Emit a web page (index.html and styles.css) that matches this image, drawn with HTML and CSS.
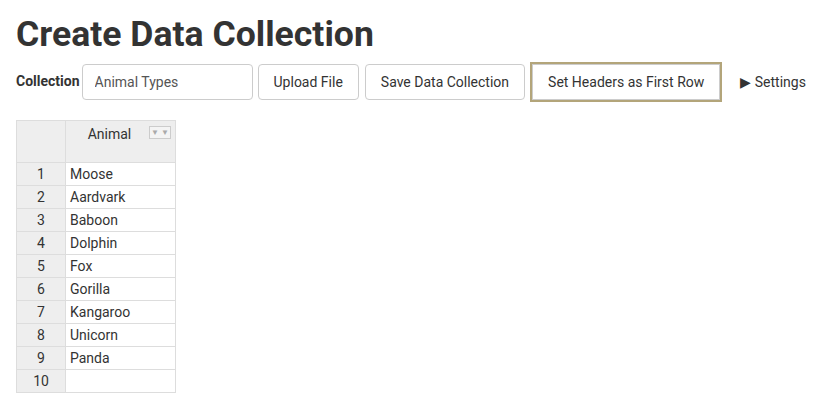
FILE: index.html
```html
<!DOCTYPE html>
<html lang="en">
<head>
    <meta charset="UTF-8">
    <title>Create Data Collection</title>
    <link rel="stylesheet" href="styles.css">
</head>
<body>
    <div class="page">
        <h1>Create Data Collection</h1>
        <div class="toolbar">
            <label class="field-label" for="collectionName">Collection</label>
            <input id="collectionName" class="text-input" type="text" value="Animal Types">
            <button class="btn">Upload File</button>
            <button class="btn">Save Data Collection</button>
            <button class="btn btn-focus">Set Headers as First Row</button>
            <div class="settings">&#9654; Settings</div>
        </div>

        <table class="grid">
            <tr>
                <th class="corner"></th>
                <th class="col-head">
                    Animal
                    <span class="filter-btn">&#9660; &#9660;</span>
                </th>
            </tr>
            <tr><td class="idx">1</td><td>Moose</td></tr>
            <tr><td class="idx">2</td><td>Aardvark</td></tr>
            <tr><td class="idx">3</td><td>Baboon</td></tr>
            <tr><td class="idx">4</td><td>Dolphin</td></tr>
            <tr><td class="idx">5</td><td>Fox</td></tr>
            <tr><td class="idx">6</td><td>Gorilla</td></tr>
            <tr><td class="idx">7</td><td>Kangaroo</td></tr>
            <tr><td class="idx">8</td><td>Unicorn</td></tr>
            <tr><td class="idx">9</td><td>Panda</td></tr>
            <tr><td class="idx">10</td><td></td></tr>
        </table>
    </div>
</body>
</html>
```

FILE: styles.css
```css
body {
    font-family: Roboto, "Liberation Sans", Arial, sans-serif;
    color: #333;
    margin: 0;
    padding: 0;
    background: #fff;
}
.page {
    padding: 12px 16px;
}
h1 {
    font-size: 35.6px;
    font-weight: bold;
    line-height: 44px;
    margin: 0 0 8px 0;
    color: #333;
}
.toolbar {
    display: flex;
    align-items: center;
    gap: 5px;
    margin-bottom: 20px;
}
.field-label {
    font-size: 14px;
    font-weight: bold;
    padding-bottom: 2px;
    margin-right: -3px;
    white-space: nowrap;
}
.text-input {
    flex: none;
    width: 171px;
    height: 36px;
    box-sizing: border-box;
    border: 1px solid #ccc;
    border-radius: 4px;
    padding: 0 12px;
    font-family: inherit;
    font-size: 14px;
    color: #555;
}
.btn {
    flex: none;
    height: 36px;
    box-sizing: border-box;
    padding: 0 15px;
    border: 1px solid #ccc;
    border-radius: 4px;
    background: #fff;
    font-family: inherit;
    font-size: 14px;
    color: #333;
    white-space: nowrap;
}
.btn + .btn {
    margin-left: 1px;
}
.btn-focus {
    outline: 2px solid #b3a57a;
    outline-offset: 0;
    border-radius: 0;
    margin-left: 2px !important;
}
.settings {
    font-size: 14px;
    margin-left: 15px;
    white-space: nowrap;
}
.grid {
    border-collapse: collapse;
    font-size: 14px;
}
.grid th, .grid td {
    border: 1px solid #ddd;
    height: 22px;
    padding: 0 4px;
}
.grid th {
    background: #eee;
    font-weight: normal;
    height: 36px;
    vertical-align: top;
}
.corner {
    width: 40px;
}
.col-head {
    width: 79px;
    position: relative;
    padding: 5px 26px 0 4px !important;
    text-align: center;
}
.filter-btn {
    position: absolute;
    top: 5px;
    right: 4px;
    width: 20px;
    height: 11px;
    border: 1px solid #ccc;
    background: #f4f4f4;
    font-size: 8px;
    line-height: 11px;
    color: #aaa;
    text-align: center;
}
.grid td {
    background: #fff;
}
.grid td.idx {
    background: #eee;
    text-align: center;
}
```
